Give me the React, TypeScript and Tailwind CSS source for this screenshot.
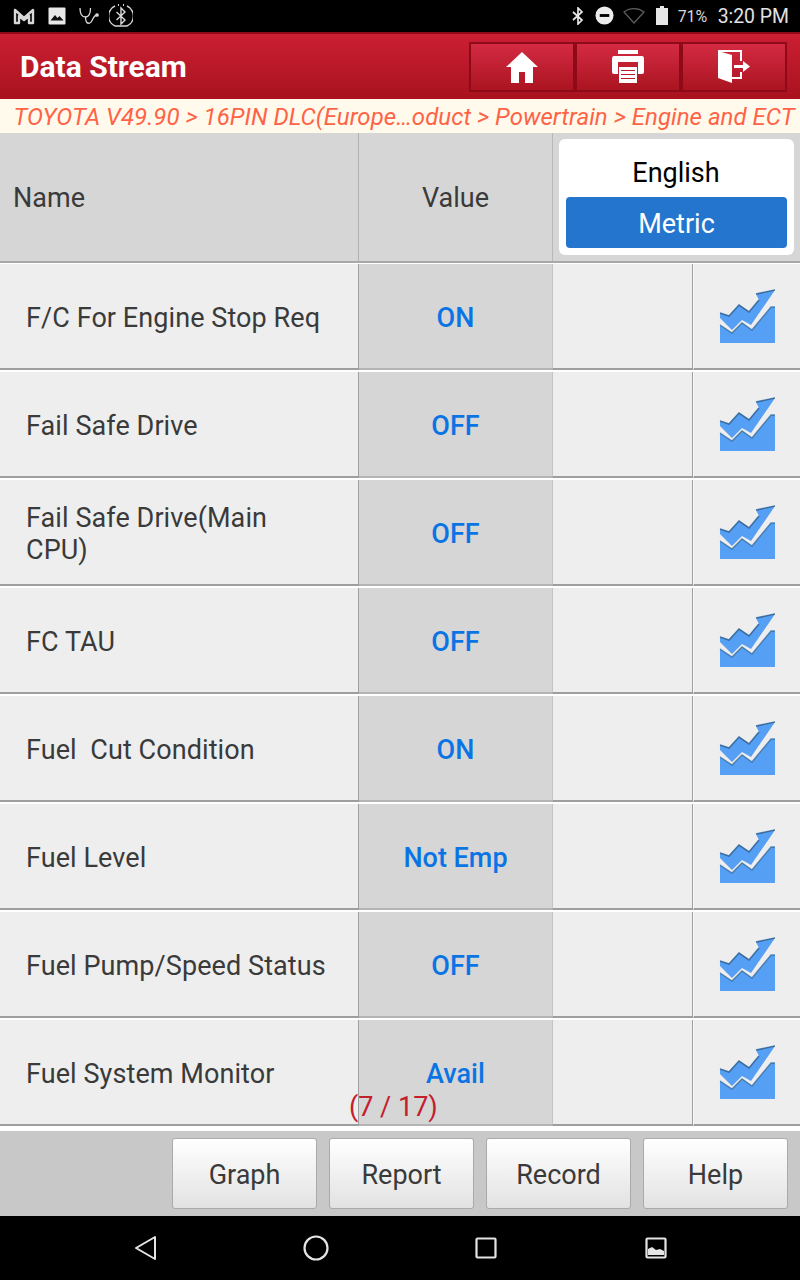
import React from 'react';

const ROWS = [
  { name: 'F/C For Engine Stop Req', value: 'ON' },
  { name: 'Fail Safe Drive', value: 'OFF' },
  { name: 'Fail Safe Drive(Main CPU)', value: 'OFF' },
  { name: 'FC TAU', value: 'OFF' },
  { name: 'Fuel\u00a0 Cut Condition', value: 'ON' },
  { name: 'Fuel Level', value: 'Not Emp' },
  { name: 'Fuel Pump/Speed Status', value: 'OFF' },
  { name: 'Fuel System Monitor', value: 'Avail' },
];

const BUTTONS = ['Graph', 'Report', 'Record', 'Help'];

const GraphIcon = () => (
  <svg width="56" height="56" viewBox="0 0 56 56">
    <path
      d="M1 24 L10 27 L20 16 L30 23 L40 11 L37 5 L56 1 L54 4 L32 36 L23 31 L13 41 L1 29 Z"
      fill="#55a0f4"
    />
    <path d="M1 36 L13 44 L23 34 L33 41 L52 18 L56 18 L56 54 L1 54 Z" fill="#55a0f4" />
    <path
      d="M1 24 L10 27 L20 16 L30 23 L40 11 M37 5 L56 1"
      fill="none"
      stroke="#2d5f93"
      strokeWidth="1.6"
      opacity="0.85"
    />
    <path d="M1 36 L13 44 L23 34 L33 41 L52 18 L56 18" fill="none" stroke="#2d5f93" strokeWidth="1.4" opacity="0.7" />
  </svg>
);

const HeaderButton = ({ children }: { children: React.ReactNode }) => (
  <div className="flex h-[50px] w-[106px] items-center justify-center border-2 border-[#8e0a18] bg-gradient-to-b from-[#d42a42] to-[#ab1420]">
    {children}
  </div>
);

const StatusBar = () => (
  <div className="flex h-[32px] items-center justify-between bg-black pl-[13px] pr-[11px]">
    <div className="flex items-center">
      <svg width="22" height="18" viewBox="0 0 22 18" fill="none" stroke="#d8d8d8" strokeWidth="2.4">
        <path d="M2 16 V3 L11 11 L20 3 V16 H16 V9 L11 13 L6 9 V16 Z" strokeLinejoin="round" />
      </svg>
      <svg className="ml-[13px]" width="18" height="18" viewBox="0 0 18 18">
        <rect width="17" height="17" x="0.5" y="0.5" rx="1" fill="#e8e8e8" />
        <path d="M2.5 13.5 L7 8 L9.5 11 L11.5 9 L15.5 13.5 Z" fill="#111" />
      </svg>
      <svg className="ml-[13px]" width="20" height="18" viewBox="0 0 20 18" fill="none" stroke="#d8d8d8" strokeWidth="1.3">
        <path d="M1 1 C1 7 3 10 6.5 10 C10 10 11.5 7 11.5 1" />
        <path d="M6.5 10 C6.5 15 8 17 11 16 C14 15 13 9 18 8" />
        <circle cx="18" cy="8" r="1.2" fill="#d8d8d8" />
      </svg>
      <svg className="ml-[10px]" width="24" height="26" viewBox="0 0 24 26" fill="none" stroke="#d8d8d8" strokeWidth="1.4">
        <path d="M6 3 A11 11 0 0 0 6 23 M18 3 A11 11 0 0 1 18 23 M6 23 H18" />
        <path d="M9 2 H10 M14 2 H15" strokeWidth="2" />
        <path d="M7.5 9 L16 17 L12 21 V5 L16 9 L7.5 17" />
      </svg>
    </div>
    <div className="flex items-center">
      <svg width="14" height="18" viewBox="0 0 14 18" fill="none" stroke="#e8e8e8" strokeWidth="1.7">
        <path d="M2 5 L11 13 L7 17 V1 L11 5 L2 13" />
      </svg>
      <svg className="ml-[10px]" width="19" height="19" viewBox="0 0 20 20">
        <circle cx="10" cy="10" r="9.5" fill="#ececec" />
        <rect x="5" y="8.5" width="10" height="3" fill="#000" />
      </svg>
      <svg className="ml-[9px]" width="22" height="16" viewBox="0 0 22 16" fill="none" stroke="#5e5e5e" strokeWidth="1.2">
        <path d="M1 4 C7 -0.5 15 -0.5 21 4 L11 15 Z" />
      </svg>
      <svg className="ml-[11px]" width="12" height="19" viewBox="0 0 12 19">
        <path d="M4 0 H8 V2 H12 V19 H0 V2 H4 Z" fill="#e6e6e6" />
      </svg>
      <span className="ml-[10px] w-[30px] pt-[2px] text-[16px] text-[#d8d8d8]">71%</span>
      <span className="ml-[10px] pt-[2px] text-[19.4px] text-[#e2e2e2]">3:20 PM</span>
    </div>
  </div>
);

const NavBar = () => (
  <div className="flex h-[64px] items-center bg-black pl-[134px]">
    <svg width="24" height="26" viewBox="0 0 24 26" fill="none" stroke="#e4e4e4" strokeWidth="2" strokeLinejoin="round">
      <path d="M2 13 L21 2 V24 Z" />
    </svg>
    <svg className="ml-[145px]" width="26" height="26" viewBox="0 0 26 26" fill="none" stroke="#e4e4e4" strokeWidth="2.2">
      <circle cx="13" cy="13" r="11.5" />
    </svg>
    <svg className="ml-[146px]" width="22" height="22" viewBox="0 0 22 22" fill="none" stroke="#e4e4e4" strokeWidth="2.2">
      <rect x="1.5" y="1.5" width="19" height="19" rx="1" />
    </svg>
    <svg className="ml-[148px]" width="22" height="22" viewBox="0 0 22 22">
      <rect x="1.5" y="1.5" width="19" height="19" rx="1" fill="none" stroke="#e4e4e4" strokeWidth="2.2" />
      <path d="M3 18 V12 L7 10 L11 13 L15 12 L19 14 V18 Z" fill="#e4e4e4" />
    </svg>
  </div>
);

export default function App() {
  return (
    <div className="flex h-[1280px] w-[800px] flex-col overflow-hidden bg-white font-['Roboto',sans-serif]">
      <StatusBar />

      <div className="flex h-[67px] items-center justify-between border-t-2 border-[#8d0a16] bg-gradient-to-b from-[#cc1f34] to-[#a8121d] pl-[20px] pr-[13px]">
        <span className="text-[30px] font-bold text-white">Data Stream</span>
        <div className="flex">
          <HeaderButton>
            <svg width="34" height="32" viewBox="0 0 34 32" fill="white">
              <path d="M17 1 L33 16 H28 V32 H20 V21 H14 V32 H6 V16 H1 Z" />
            </svg>
          </HeaderButton>
          <HeaderButton>
            <svg width="34" height="33" viewBox="0 0 34 33" fill="white">
              <path d="M7 0 H27 V4 H7 Z" />
              <path d="M3 6 H31 Q33 6 33 9 V22 Q33 24 31 24 H27 V12 H7 V24 H3 Q1 24 1 22 V9 Q1 6 3 6 Z" />
              <path d="M8 17 H26 V33 H8 Z M10 20 V21 H24 V20 Z M10 24 V25 H24 V24 Z M10 28 V29 H24 V28 Z" fillRule="evenodd" />
            </svg>
          </HeaderButton>
          <HeaderButton>
            <svg width="34" height="34" viewBox="0 0 34 34" fill="none">
              <path d="M1 1 L15 5 V33 L1 28 Z" fill="white" />
              <path d="M1 1 H24 V11 M24 22 V28 H15" stroke="white" strokeWidth="2" />
              <path d="M17 15 H26 V11 L33 16.5 L26 22 V18 H17 Z" fill="white" />
            </svg>
          </HeaderButton>
        </div>
      </div>

      <div className="flex h-[34px] items-center justify-center whitespace-nowrap bg-[#fffaeb] pl-[8px] pt-[2px] text-[24px] italic tracking-[0.03px] text-[#ff6347]">
        TOYOTA V49.90 &gt; 16PIN DLC(Europe…oduct &gt; Powertrain &gt; Engine and ECT
      </div>

      <div className="flex h-[130px] border-b-2 border-[#a8a8a8] bg-[#d6d6d6] text-[27px] text-[#3a3a3a]">
        <div className="flex w-[359px] items-center border-r border-[#b0b0b0] pl-[13px] pt-[2px]">Name</div>
        <div className="flex w-[194px] items-center justify-center border-r border-[#b8b8b8] pt-[2px]">Value</div>
        <div className="flex-1 pl-[6px] pr-[6px] pt-[6px]">
          <div className="flex h-[116px] w-full flex-col rounded-[6px] bg-white px-[7px] pb-[7px]">
            <div className="flex h-[51px] shrink-0 items-center justify-center pr-[1px] pt-[17px] text-black">English</div>
            <div className="mt-[7px] flex flex-1 items-center justify-center rounded-[4px] bg-[#2475cd] pt-[4px] text-white">Metric</div>
          </div>
        </div>
      </div>

      <div className="relative flex h-[868px] flex-col gap-[2px] pt-[1px]">
        {ROWS.map((row) => (
          <div key={row.name} className="flex h-[106px] shrink-0">
            <div className="flex w-[359px] items-center border-r border-b-2 border-[#9e9e9e] bg-[#eeeeee] pl-[26px] pr-[28px] pt-[4px] text-[27px] leading-[32px] tracking-[0.08px] text-[#3a3a3a]">
              {row.name}
            </div>
            <div className="flex w-[193px] items-center justify-center border-b-2 border-[#b4b4b4] bg-[#d6d6d6] pt-[4px] text-[27px] font-medium text-[#0b74e5]">
              {row.value}
            </div>
            <div className="w-[141px] border-x border-b-2 border-l-[#c4c4c4] border-r-[#a0a0a0] border-b-[#9e9e9e] bg-[#eeeeee]"></div>
            <div className="flex flex-1 items-center justify-center border-b-2 border-l border-b-[#9e9e9e] border-l-[#f8f8f8] bg-[#eeeeee] pt-[2px]">
              <GraphIcon />
            </div>
          </div>
        ))}
        <span className="absolute left-[349px] top-[828px] text-[27px] leading-[32px] text-[#c3202f]">(7 / 17)</span>
      </div>

      <div className="flex flex-1 items-center justify-end gap-[12px] bg-[#c8c8c8] pr-[12px]">
        {BUTTONS.map((label) => (
          <div
            key={label}
            className="flex h-[71px] w-[145px] items-center justify-center rounded-[3px] border border-[#aaaaaa] bg-gradient-to-b from-white to-[#e2e2e2] pt-[3px] text-[27px] text-[#3a3a3a]"
          >
            {label}
          </div>
        ))}
      </div>

      <NavBar />
    </div>
  );
}
